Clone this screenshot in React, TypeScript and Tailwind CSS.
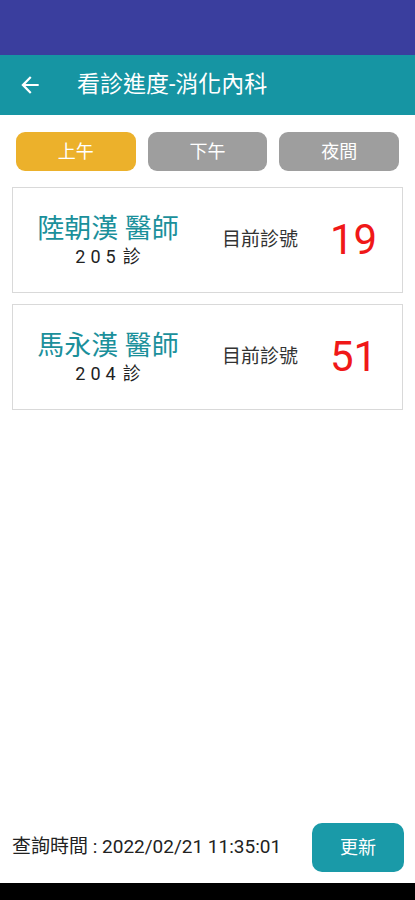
import React from "react";

const CJK = "Roboto, 'Noto Sans CJK TC', 'Noto Sans', sans-serif";

function Card({ name, room, num }: { name: string; room: string; num: string }) {
  return (
    <div className="mx-[12px] h-[106px] border border-[#d9d9d9] flex items-center bg-white">
      <div className="w-[190px] flex flex-col items-center">
        <div className="text-[27px] leading-[32px] text-[#1b909b]">{name}</div>
        <div className="flex items-center text-[#222] mt-[1px]">
          <span className="text-[18px] leading-[22px] tracking-[5px]">{room}</span>
          <span className="text-[18px] leading-[22px] ml-[2px]">診</span>
        </div>
      </div>
      <div className="ml-[19px] text-[19px] text-[#333]">目前診號</div>
      <div className="ml-[32px] text-[42px] leading-none text-[#f01818]">{num}</div>
    </div>
  );
}

export default function App() {
  return (
    <div className="w-[415px] h-[900px] flex flex-col bg-white" style={{ fontFamily: CJK }}>
      <div className="h-[55px] bg-[#3a3e9e]" />
      <div className="h-[60px] bg-[#1695a3] flex items-center">
        <svg width="26" height="26" viewBox="0 0 24 24" className="ml-[17px]" fill="white">
          <path d="M20 11H7.83l5.59-5.59L12 4l-8 8 8 8 1.41-1.41L7.83 13H20v-2z" />
        </svg>
        <div className="ml-[34px] text-[23px] font-normal text-white">看診進度-消化內科</div>
      </div>
      <div className="flex gap-[12px] px-[16px] pt-[17px]">
        <div className="flex-1 h-[39px] rounded-[9px] bg-[#ecb12b] text-white text-[18px] flex items-center justify-center">上午</div>
        <div className="flex-1 h-[39px] rounded-[9px] bg-[#9e9e9e] text-white text-[18px] flex items-center justify-center">下午</div>
        <div className="flex-1 h-[39px] rounded-[9px] bg-[#9e9e9e] text-white text-[18px] flex items-center justify-center">夜間</div>
      </div>
      <div className="flex flex-col gap-[11px] mt-[16px]">
        <Card name="陸朝漢 醫師" room="205" num="19" />
        <Card name="馬永漢 醫師" room="204" num="51" />
      </div>
      <div className="flex-1" />
      <div className="flex items-center justify-between pl-[12px] pr-[11px] pb-[11px]">
        <div className="text-[19px] text-[#222]">查詢時間 : 2022/02/21 11:35:01</div>
        <div className="w-[92px] h-[49px] rounded-[10px] bg-[#1a9aa8] text-white text-[18px] flex items-center justify-center">更新</div>
      </div>
      <div className="h-[17px] bg-black" />
    </div>
  );
}
